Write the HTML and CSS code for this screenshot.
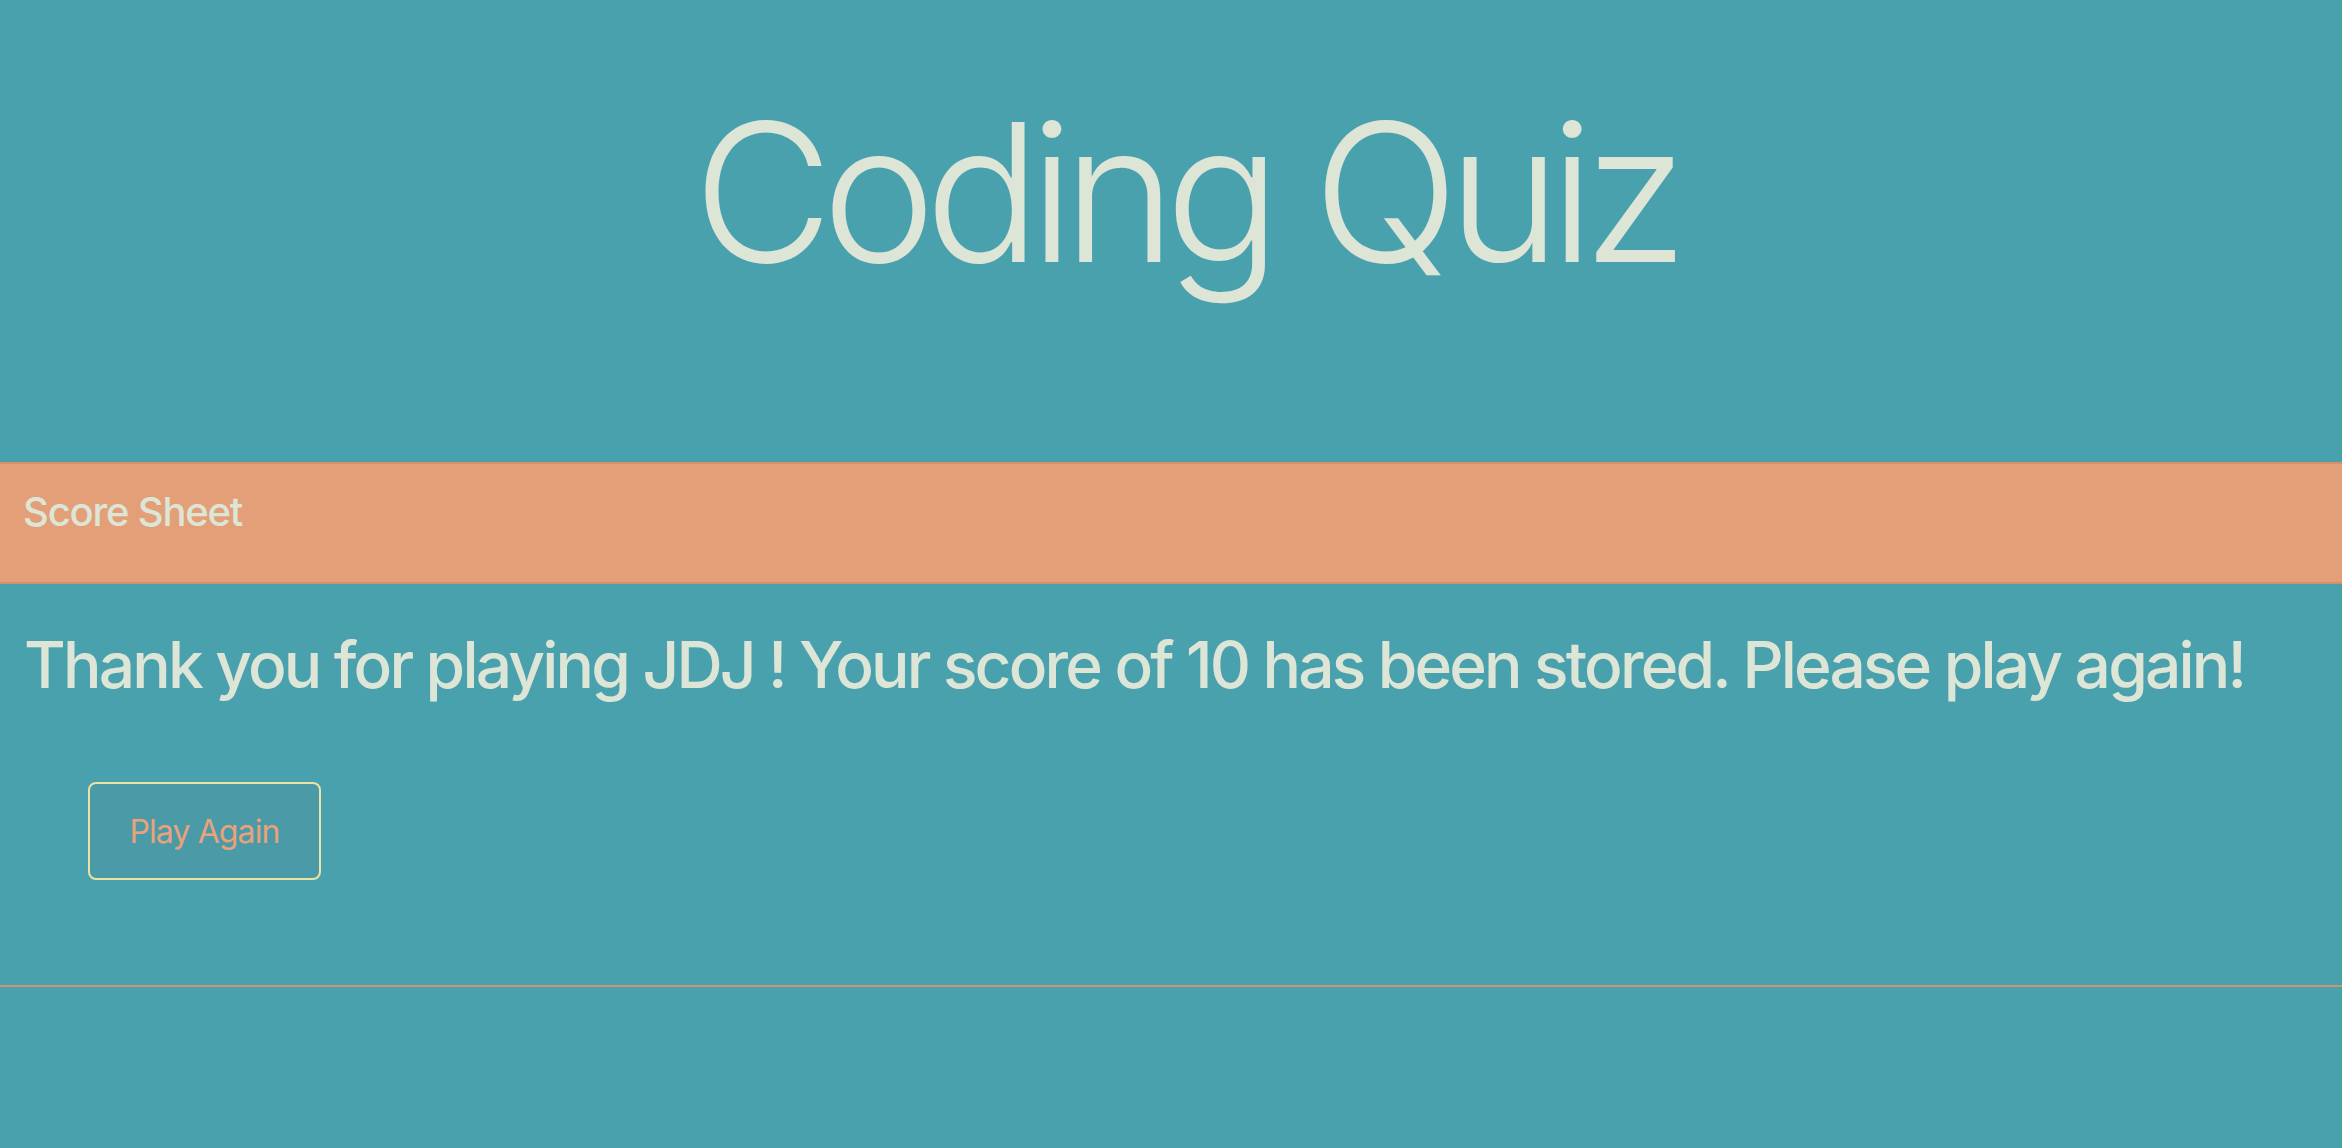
FILE: index.html
```html
<!DOCTYPE html>
<html lang="en">
<head>
<meta charset="utf-8">
<title>Coding Quiz</title>
<link rel="stylesheet" href="styles.css">
</head>
<body>
  <header class="masthead">
    <h1 class="title">Coding Quiz</h1>
  </header>
  <section class="card">
    <div class="card-header">
      <h5 class="card-title">Score Sheet</h5>
    </div>
    <div class="card-body">
      <h2 class="message">Thank you for playing JDJ ! Your score of 10 has been stored. Please play again!</h2>
      <button class="btn-again" type="button">Play Again</button>
    </div>
  </section>
  <hr class="divider">
</body>
</html>
```

FILE: styles.css
```css
html, body {
  margin: 0;
  padding: 0;
}
body {
  background: #4aa1ae;
  color: #dce5d6;
  font-family: Inter, Roboto, "Liberation Sans", sans-serif;
  height: 1148px;
  overflow: hidden;
}
.masthead {
  padding-top: 77px;
  height: 462px;
  box-sizing: border-box;
  text-align: center;
}
.title {
  margin: 0;
  padding-left: 28px;
  font-size: 192px;
  font-weight: 300;
  line-height: 1.2;
  letter-spacing: -11px;
  color: #dce5d6;
}
.card-header {
  background: #e39f77;
  border-top: 2px solid #d68f68;
  border-bottom: 2px solid #d68f68;
  padding: 24px 23px;
}
.card-title {
  margin: 0 0 22px 0;
  font-size: 40px;
  line-height: 48px;
  font-weight: 500;
  letter-spacing: -1.2px;
  color: #dce5d6;
}
.card-body {
  padding: 43px 24px 0 24px;
  height: 401px;
  box-sizing: border-box;
}
.message {
  margin: 0 0 78px 0;
  font-size: 64px;
  line-height: 1.2;
  font-weight: 550;
  letter-spacing: -2.8px;
  white-space: nowrap;
  color: #dce5d6;
}
.btn-again {
  margin-left: 64px;
  width: 233px;
  height: 98px;
  box-sizing: border-box;
  border: 2px solid #ece2a6;
  border-radius: 8px;
  background: #4a9ba7;
  color: #e9a27a;
  font-family: Inter, Roboto, "Liberation Sans", sans-serif;
  font-size: 32px;
  font-weight: 400;
  letter-spacing: -0.9px;
  padding: 2px 0 0 0;
  cursor: pointer;
}
.divider {
  margin: 0;
  border: 0;
  height: 2px;
  background: #d1946e;
}
```
